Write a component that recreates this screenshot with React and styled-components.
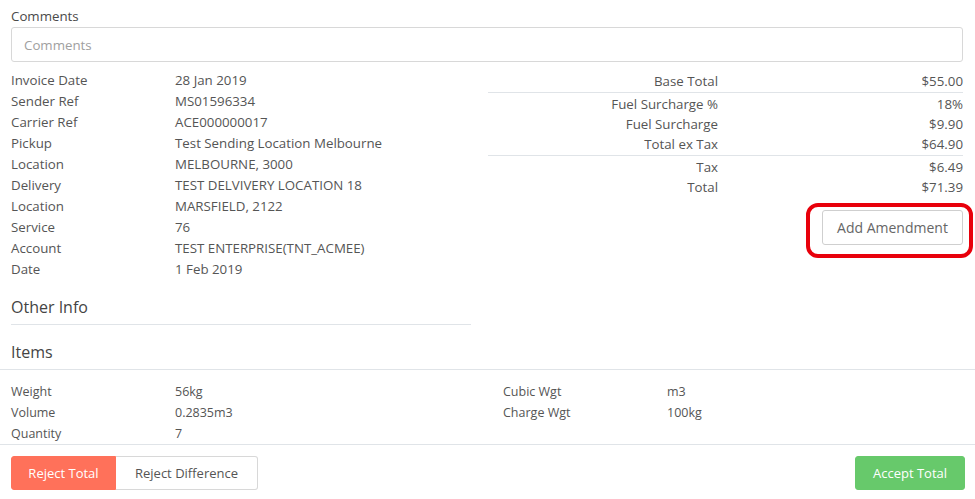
import React from 'react';
import styled, { createGlobalStyle } from 'styled-components';

const GlobalStyle = createGlobalStyle`
  body {
    margin: 0;
    background: #fff;
    font-family: "Open Sans", "Liberation Sans", sans-serif;
    color: #585858;
  }
`;

const details = [
  ['Invoice Date', '28 Jan 2019'],
  ['Sender Ref', 'MS01596334'],
  ['Carrier Ref', 'ACE000000017'],
  ['Pickup', 'Test Sending Location Melbourne'],
  ['Location', 'MELBOURNE, 3000'],
  ['Delivery', 'TEST DELVIVERY LOCATION 18'],
  ['Location', 'MARSFIELD, 2122'],
  ['Service', '76'],
  ['Account', 'TEST ENTERPRISE(TNT_ACMEE)'],
  ['Date', '1 Feb 2019'],
];

const totals = [
  [['Base Total', '$55.00']],
  [
    ['Fuel Surcharge %', '18%'],
    ['Fuel Surcharge', '$9.90'],
    ['Total ex Tax', '$64.90'],
  ],
  [
    ['Tax', '$6.49'],
    ['Total', '$71.39'],
  ],
];

const items = [
  ['Weight', '56kg', 'Cubic Wgt', 'm3'],
  ['Volume', '0.2835m3', 'Charge Wgt', '100kg'],
  ['Quantity', '7', '', ''],
];

export default function App() {
  return (
    <Page>
      <GlobalStyle />
      <Padded>
        <FieldLabel>Comments</FieldLabel>
        <CommentInput placeholder="Comments" />
        <TopGrid>
          <div>
            <DetailList>
              {details.map(([label, value], i) => (
                <React.Fragment key={i}>
                  <span>{label}</span>
                  <span>{value}</span>
                </React.Fragment>
              ))}
            </DetailList>
            <SubHeading>Other Info</SubHeading>
          </div>
          <RightCol>
            {totals.map((group, gi) => (
              <TotalGroup key={gi} first={gi === 0}>
                {group.map(([label, value]) => (
                  <TotalRow key={label}>
                    <span>{label}</span>
                    <span>{value}</span>
                  </TotalRow>
                ))}
              </TotalGroup>
            ))}
            <AmendWrap>
              <GhostButton>Add Amendment</GhostButton>
              <Highlight />
            </AmendWrap>
          </RightCol>
        </TopGrid>
      </Padded>
      <ItemsHeading>Items</ItemsHeading>
      <ItemsGrid>
        {items.map((row, i) => (
          <React.Fragment key={i}>
            {row.map((cell, j) => (
              <span key={j}>{cell}</span>
            ))}
          </React.Fragment>
        ))}
      </ItemsGrid>
      <Footer>
        <ButtonGroup>
          <ActionButton variant="reject">Reject Total</ActionButton>
          <ActionButton variant="plain">Reject Difference</ActionButton>
        </ButtonGroup>
        <ActionButton variant="accept">Accept Total</ActionButton>
      </Footer>
    </Page>
  );
}

const Page = styled.div`
  width: 975px;
  height: 499px;
  overflow: hidden;
  padding-top: 6px;
  box-sizing: border-box;
  font-size: 13.3px;
`;

const Padded = styled.div`
  padding: 0 12px 0 11px;
`;

const FieldLabel = styled.div`
  line-height: 20px;
  color: #4a4a4a;
  margin-bottom: 1px;
`;

const CommentInput = styled.input`
  display: block;
  width: 100%;
  height: 35px;
  box-sizing: border-box;
  border: 1px solid #d8d8d8;
  border-radius: 3px;
  padding: 0 12px;
  font-family: inherit;
  font-size: 13.3px;
  &::placeholder {
    color: #a0a0a0;
  }
`;

const TopGrid = styled.div`
  display: grid;
  grid-template-columns: 460px 1fr;
  column-gap: 17px;
  margin-top: 8px;
`;

const DetailList = styled.div`
  display: grid;
  grid-template-columns: 164px 1fr;
  line-height: 21px;
  color: #555;
`;

const SubHeading = styled.div`
  margin-top: 16px;
  font-size: 16px;
  line-height: 22px;
  color: #444;
  padding-bottom: 6px;
  border-bottom: 1px solid #e0e4e8;
`;

const RightCol = styled.div`
  display: flex;
  flex-direction: column;
  margin-top: 1px;
`;

const TotalGroup = styled.div`
  border-top: ${(p) => (p.first ? 'none' : '1px solid #e0e4e8')};
  padding-top: ${(p) => (p.first ? '0' : '1px')};
  margin-top: ${(p) => (p.first ? '0' : '1px')};
`;

const TotalRow = styled.div`
  display: grid;
  grid-template-columns: 230px 1fr;
  line-height: 20px;
  color: #555;
  span {
    text-align: right;
  }
`;

const AmendWrap = styled.div`
  position: relative;
  align-self: flex-end;
  margin-top: 13px;
`;

const GhostButton = styled.button`
  width: 141px;
  height: 35px;
  background: #fff;
  border: 1px solid #cfcfcf;
  border-radius: 3px;
  font-family: inherit;
  font-size: 14px;
  color: #666;
`;

const Highlight = styled.div`
  position: absolute;
  left: -16px;
  right: -10px;
  top: -7px;
  bottom: -13px;
  border: 4px solid #e8000b;
  border-radius: 12px;
  pointer-events: none;
`;

const ItemsHeading = styled.div`
  margin-top: 16px;
  padding: 0 11px 6px;
  font-size: 16px;
  line-height: 22px;
  color: #444;
  border-bottom: 1px solid #e0e4e8;
`;

const ItemsGrid = styled.div`
  display: grid;
  grid-template-columns: 164px 328px 164px 1fr;
  padding: 0 11px;
  margin-top: 11px;
  line-height: 21px;
  font-size: 12.5px;
  color: #555;
  border-bottom: 1px solid #e0e4e8;
`;

const Footer = styled.div`
  display: flex;
  justify-content: space-between;
  align-items: center;
  padding: 11px 11px 0;
`;

const ButtonGroup = styled.div`
  display: flex;
`;

const palette = {
  reject: { bg: '#ff715a', color: '#fff', border: '#ff715a' },
  plain: { bg: '#fff', color: '#555', border: '#d8d8d8' },
  accept: { bg: '#67c96b', color: '#fff', border: '#67c96b' },
};

const ActionButton = styled.button`
  height: 34px;
  padding: 0 13px;
  font-family: inherit;
  font-size: 13px;
  background: ${(p) => palette[p.variant].bg};
  color: ${(p) => palette[p.variant].color};
  border: 1px solid ${(p) => palette[p.variant].border};
  border-radius: 3px;
  ${ButtonGroup} > &:first-child {
    border-radius: 3px 0 0 3px;
    width: 105px;
  }
  ${ButtonGroup} > &:last-child {
    border-radius: 0 3px 3px 0;
    border-left: none;
    width: 142px;
  }
  ${(p) => p.variant === 'accept' && 'width: 110px; margin-right: -1px;'}
`;
